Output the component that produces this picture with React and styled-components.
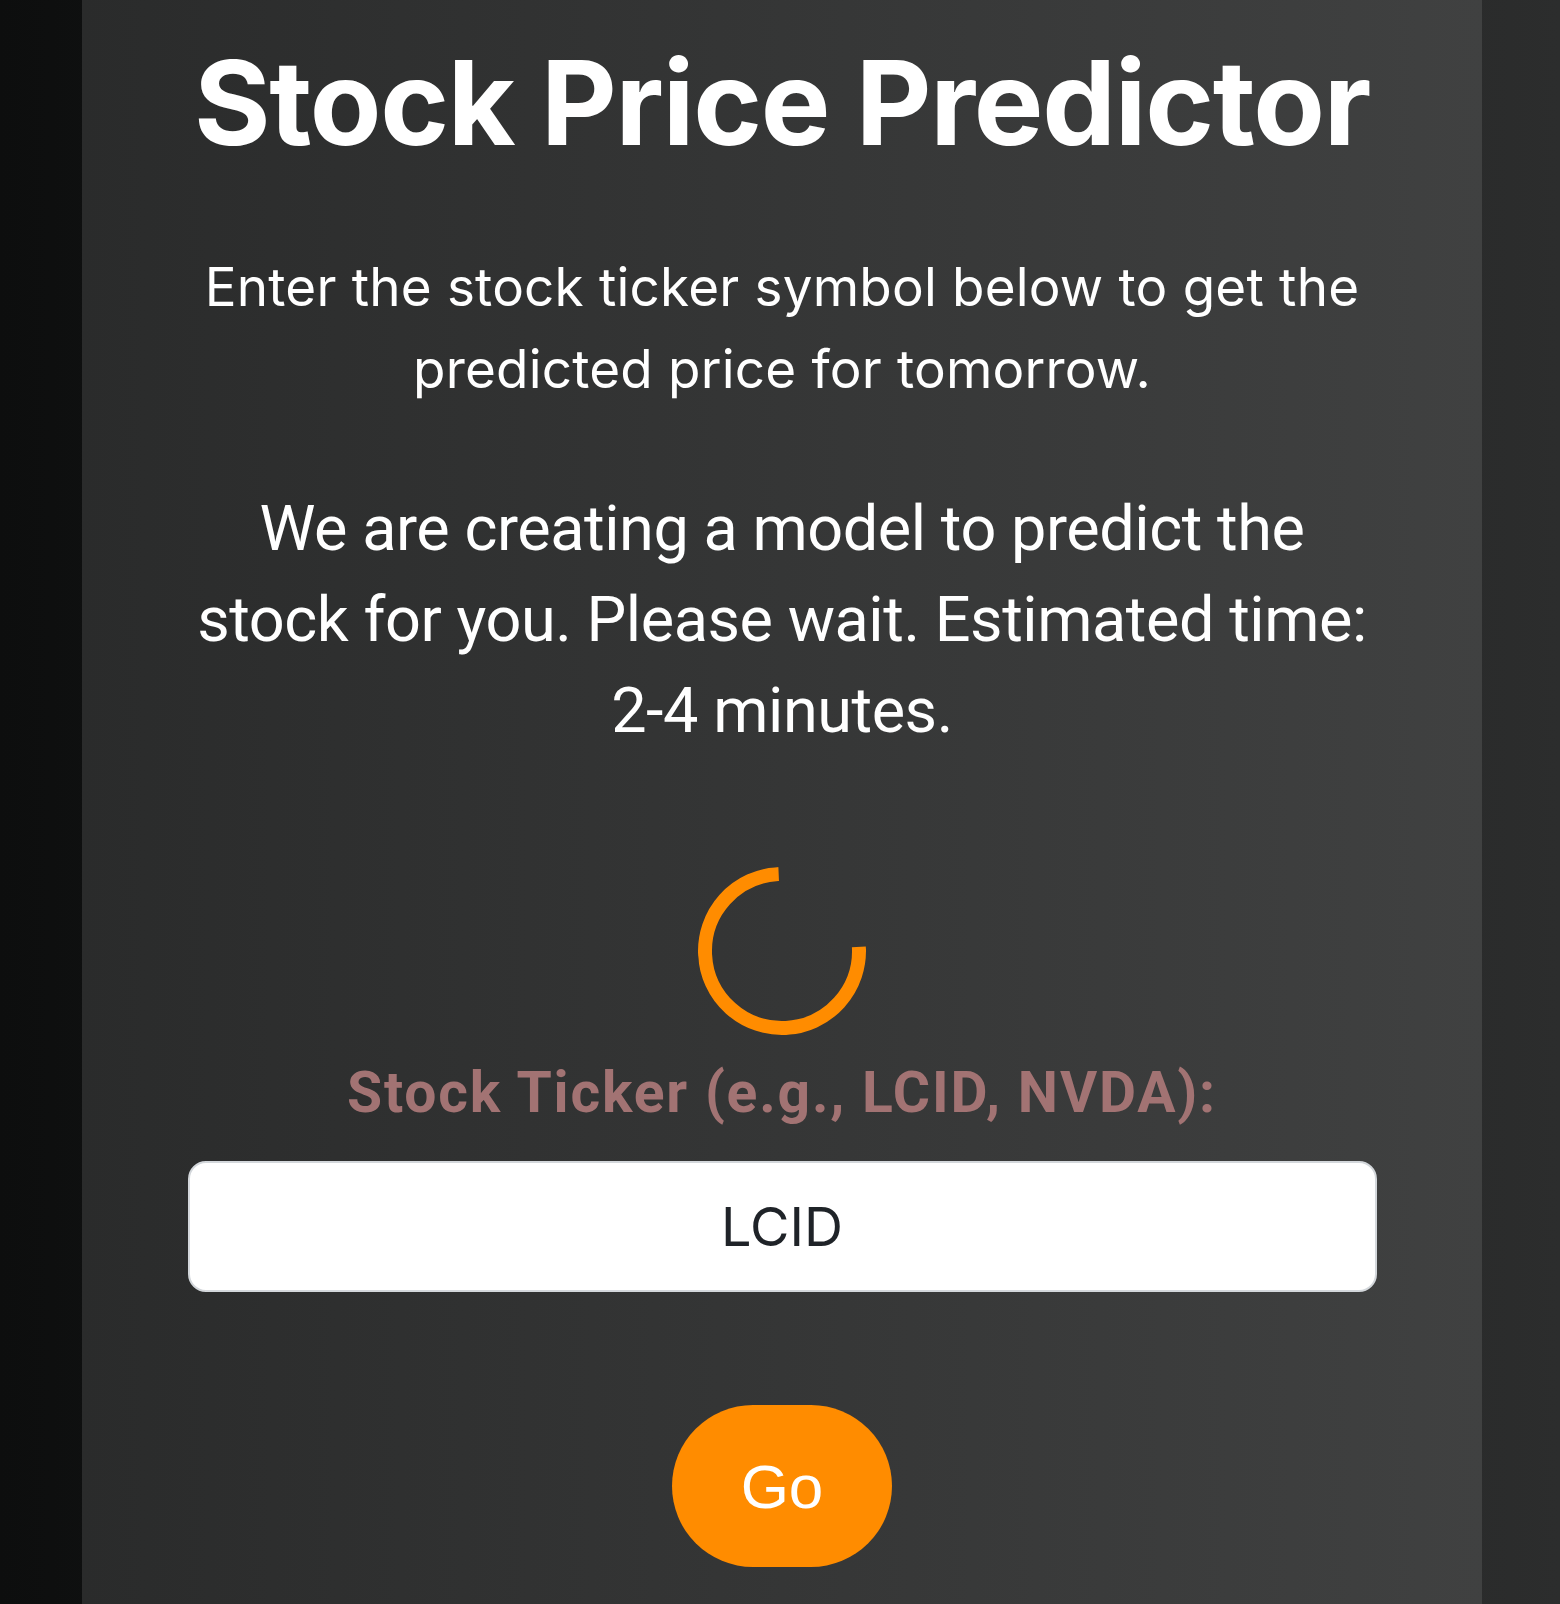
import styled, { createGlobalStyle } from "styled-components";

const GlobalStyle = createGlobalStyle`
  html, body {
    margin: 0;
    padding: 0;
  }
  body {
    min-height: 100vh;
    background: linear-gradient(to right, #0d0e0e, #2c2d2d);
  }
`;

const Page = styled.div`
  display: flex;
  padding-left: 82px;
`;

const Panel = styled.main`
  width: 1400px;
  min-height: 100vh;
  box-sizing: border-box;
  padding-top: 33px;
  padding-bottom: 37px;
  background: linear-gradient(to right, #2a2b2b, #404141);
  display: flex;
  flex-direction: column;
  align-items: center;
  text-align: center;
  color: #ffffff;
`;

const Title = styled.h1`
  margin: 0;
  font-family: Inter, "Liberation Sans", sans-serif;
  font-weight: 700;
  font-size: 117px;
  line-height: 140px;
  letter-spacing: -1.25px;
`;

const Text = styled.p`
  margin: ${(p) => p.$top}px 0 0;
  max-width: ${(p) => p.$width}px;
  font-family: ${(p) => (p.$wide ? "Inter" : "Roboto")}, "Liberation Sans", sans-serif;
  font-weight: 400;
  font-size: ${(p) => p.$size}px;
  line-height: ${(p) => p.$lh}px;
  letter-spacing: ${(p) => p.$track}px;
`;

const Spinner = styled.svg`
  margin-top: 111px;
  width: 168px;
  height: 168px;
  transform: rotate(-3deg);
`;

const Label = styled.label`
  margin-top: 24px;
  font-family: Roboto, "Liberation Sans", sans-serif;
  font-weight: 700;
  font-size: 57px;
  line-height: 68px;
  letter-spacing: 1.8px;
  color: #a27373;
`;

const Input = styled.input`
  margin-top: 34px;
  width: 1189px;
  height: 131px;
  box-sizing: border-box;
  border: 2px solid #d3d7db;
  border-radius: 18px;
  background: #ffffff;
  text-align: center;
  font-family: Inter, "Liberation Sans", sans-serif;
  font-size: 54px;
  color: #1f2328;
  outline: none;
`;

const GoButton = styled.button`
  margin-top: 113px;
  width: 220px;
  height: 162px;
  border: none;
  border-radius: 81px;
  background: #ff8c00;
  color: #ffffff;
  font-family: "Liberation Sans", Arial, sans-serif;
  font-size: 62px;
  cursor: pointer;
`;

const App = () => {
  return (
    <Page>
      <GlobalStyle />
      <Panel>
        <Title>Stock Price Predictor</Title>
        <Text $wide $top={73} $size={53} $lh={82} $width={1200} $track={0.2}>
          Enter the stock ticker symbol below to get the predicted price for tomorrow.
        </Text>
        <Text $top={73} $size={63} $lh={91} $width={1200} $track={-0.45}>
          We are creating a model to predict the stock for you. Please wait. Estimated time: 2-4 minutes.
        </Text>
        <Spinner viewBox="0 0 168 168">
          <circle
            cx="84"
            cy="84"
            r="77"
            fill="none"
            stroke="#ff8c00"
            strokeWidth="14"
            strokeDasharray="363 484"
          />
        </Spinner>
        <Label htmlFor="ticker">Stock Ticker (e.g., LCID, NVDA):</Label>
        <Input id="ticker" type="text" defaultValue="LCID" />
        <GoButton>Go</GoButton>
      </Panel>
    </Page>
  );
};

export default App;
